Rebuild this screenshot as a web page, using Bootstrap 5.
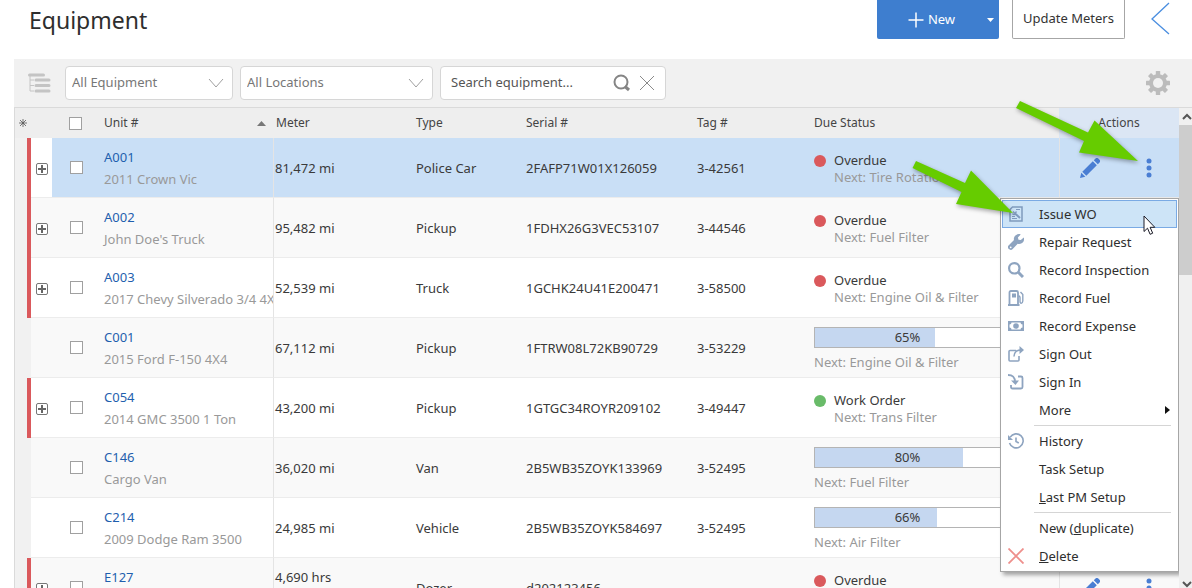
<!DOCTYPE html>
<html lang="en">
<head>
<meta charset="utf-8">
<meta name="viewport" content="width=device-width, initial-scale=1">
<title>Equipment</title>
<link rel="stylesheet" href="https://cdn.jsdelivr.net/npm/bootstrap@5.3.0/dist/css/bootstrap.min.css">
<style>
  body { font-family: "Noto Sans", "Open Sans", sans-serif; font-size: 13px; line-height: 18px; color: #3a3a3a; background: #fff; }
  .page-head { height: 59px; padding-left: 29px; padding-right: 22px; }
  .page-title { font-size: 23px; line-height: 40px; color: #2e2e2e; font-weight: 400; }
  .head-btn { height: 39px; border-radius: 0 0 2px 2px; font-size: 13px; border-top: 0; }
  .btn-new { width: 122px; background: #3e7ecf; color: #fff; border: 0; }
  .btn-new:hover { background: #346fbb; color: #fff; }
  .btn-meters { width: 113px; margin-left: 13px; border: 1px solid #a6a6a6; border-top: 0; color: #333; background: #fff; }
  .back-link { margin-left: 26px; height: 38px; }
  .panel { margin-left: 14px; }
  .toolbar { height: 48px; background: #f1f1f1; padding: 0 22px 0 14px; }
  .toolbar .form-select, .search-box { height: 34px; border: 1px solid #d6d6d6; border-radius: 4px; background-color: #fff; font-size: 13px; color: #777; }
  .toolbar .form-select { padding: 0 30px 0 6px;
    background-image: url("data:image/svg+xml,%3Csvg xmlns='http://www.w3.org/2000/svg' width='16' height='16' fill='none' stroke='%23a0a0a0'%3E%3Cpath d='M1 4l7 8 7-8'/%3E%3C/svg%3E");
    background-size: 16px 16px; background-position: right 8px center; }
  .pick-equipment { width: 168px; margin-left: 14px; }
  .pick-location { width: 193px; margin: 0 7px; }
  .search-box { width: 226px; padding: 0 10px; }
  .search-box input { font-size: 13px; color: #444; }
  .search-box input::placeholder { color: #555; opacity: 1; }
  .grid-wrap { border-top: 1px solid #dadada; border-left: 1px solid #dadada; }
  .grid-body { background: #f1f1f1; }
  .grid-table { table-layout: fixed; border-collapse: separate; border-spacing: 0; }
  .grid-table th { height: 30px; padding: 0; background: #eee; font-weight: 400; color: #444; font-size: 12px; }
  .grid-table th.th-actions { background: #dbe6f4; }
  .grid-table td { height: 60px; padding: 0; border-bottom: 1px solid #ececec; background: #fff; white-space: nowrap; }
  .grid-table tr:nth-child(even) td { background: #f9f9f9; }
  .grid-table tr.picked td { background: #c9dff6; }
  .grid-table tr.picked td.c-expand { background: #fff; }
  .grid-table tr td.c-gutter { background: #f1f1f1; border-bottom: 0; border-right: 4px solid #f1f1f1; }
  .grid-table tr.overdue td.c-gutter { border-right-color: #da595c; }
  .w-gutter { width: 16px; } .w-expand { width: 21px; } .w-check { width: 46px; } .w-unit { width: 176px; }
  .w-meter { width: 142px; } .w-type { width: 110px; } .w-serial { width: 171px; } .w-tag { width: 117px; } .w-act { width: 120px; }
  .grid-table .c-unit { padding-left: 6px; border-right: 1px solid #e4e4e4; overflow: hidden; }
  .grid-table th.th-unit { padding: 0 8px 0 6px; }
  .grid-table th.th-meter { padding-left: 2px; }
  .grid-table td.c-meter { padding-left: 1px; }
  .grid-table td.c-check { padding-left: 18px; }
  .grid-table th.th-check { padding-left: 17px; }
  .grid-table .c-act { border-left: 1px solid #e4e4e4; }
  .unit-link { color: #1f5fae; text-decoration: none; }
  .unit-name { color: #999; margin-top: 4px; }
  .next-task { color: #999; line-height: 17px; }
  .status-line { line-height: 17px; margin-top: 3px; }
  .dot { width: 12px; height: 12px; border-radius: 50%; background: #da595c; margin-right: 8px; }
  .dot-ok { background: #69bb69; }
  .due-bar { width: 187px; height: 21px; border: 1px solid #b4b4b4; border-radius: 0; background: #fff; font-size: 13px; margin: 3px 0 6px; }
  .due-bar .progress-bar { background: #c5d7f0; }
  .due-bar .due-pct { color: #3a3a3a; inset: 0; line-height: 19px; }
  .tick[type=checkbox] { width: 13px; height: 13px; margin: 0; border: 1px solid #a0a0a0; border-radius: 0; background-color: #fff; float: none; }
  .plain-btn { border: 0; background: transparent; padding: 0; line-height: 0; color: inherit; }
  .expand-btn { padding-left: 5px; }
  .row-tools { color: #4a7ed3; padding-left: 20px; gap: 38px; }
  .scroll-rail { width: 13px; background: #f0f0f0; overflow: hidden; color: #555; }
  .scroll-rail .plain-btn { height: 17px; padding-left: 3px; }
  .scroll-thumb { height: 150px; background: #cdcdcd; }
  .row-menu { top: 60px; right: 0; width: 179px; min-width: 0; padding: 1px; border: 1px solid #a6a6a6; border-radius: 0; box-shadow: 3px 3px 4px rgba(0,0,0,.35); font-size: 13px; z-index: 20; }
  .row-menu .dropdown-item { height: 28px; padding: 0 5px; line-height: 18px; gap: 15px; color: #2e2e2e; border: 1px solid transparent; }
  .row-menu .dropdown-item.hot { background: #cde4f7; border-color: #7aaae4; }
  .row-menu .dropdown-divider { margin: 1px 6px 1px 32px; border-color: #d5d5d5; opacity: 1; }
  .menu-icon { width: 16px; height: 16px; flex: none; color: #8ea4c0; }
  .pointer-art { z-index: 30; right: 13px; top: 39px; pointer-events: none; filter: drop-shadow(1px 2px 2px rgba(0,0,0,.35)); }
  .mouse-art { z-index: 31; right: 23px; top: 77px; pointer-events: none; }
</style>
</head>
<body class="vh-100 overflow-hidden d-flex flex-column">

<svg class="d-none" aria-hidden="true">
  <symbol id="i-plus" viewBox="0 0 12 12"><rect x=".5" y=".5" width="11" height="11" rx="1.500" fill="#fff" stroke="#777"/><path d="M2 6h8M6 2v8" stroke="#666" stroke-width="2"/></symbol>
  <symbol id="i-pencil" viewBox="0 0 20 20"><path fill="currentColor" d="M0 20l1.300-5.300L5.300 18.700zM2.300 13.700L12.800 3.200l4 4L6.300 17.700zM13.800 2.200L15.500.6a2 2 0 0 1 2.800 0l1.200 1.200a2 2 0 0 1 0 2.800l-1.700 1.600z"/></symbol>
  <symbol id="i-dots" viewBox="0 0 6 20"><g fill="currentColor"><circle cx="3" cy="3" r="2.500"/><circle cx="3" cy="10" r="2.500"/><circle cx="3" cy="17" r="2.500"/></g></symbol>
</svg>

<header class="page-head d-flex align-items-start flex-shrink-0">
  <h1 class="page-title m-0 me-auto">Equipment</h1>
  <button type="button" class="btn btn-new head-btn d-flex align-items-center p-0">
    <svg class="ms-auto me-1" width="16" height="16" fill="none" stroke="#fff" stroke-width="1.500"><path d="M8 .5v15M.5 8h15"/></svg>New
    <svg class="ms-auto me-1" width="9" height="6"><path d="M1 1h7l-3.500 4z" fill="#fff"/></svg>
  </button>
  <button type="button" class="btn btn-meters head-btn p-0">Update Meters</button>
  <a href="#" class="back-link" aria-label="Back"><svg width="19" height="38" fill="none" stroke="#4a8ee0" stroke-width="1.300"><path d="M18 3L1 19l17 15"/></svg></a>
</header>

<main class="panel d-flex flex-column flex-grow-1 overflow-hidden position-relative">
  <form class="toolbar d-flex align-items-center flex-shrink-0">
    <button type="button" class="plain-btn" aria-label="Tree view">
      <svg width="23" height="20" stroke="#c4c4c4" fill="none"><path d="M1.500 2h14M8 7h13M8 12.500h13M8 18h13" stroke-width="3" stroke-linecap="round"/><path d="M2 3v15M2 7h4M2 12.500h4M2 18h4" stroke-width="1"/></svg>
    </button>
    <select class="form-select pick-equipment flex-shrink-0" aria-label="Equipment"><option>All Equipment</option></select>
    <select class="form-select pick-location flex-shrink-0" aria-label="Location"><option>All Locations</option></select>
    <div class="search-box d-flex align-items-center">
      <input type="text" class="form-control border-0 p-0 shadow-none" placeholder="Search equipment..." aria-label="Search equipment">
      <button type="button" class="plain-btn" aria-label="Search"><svg width="18" height="18" fill="none" stroke="#858585" stroke-width="2"><circle cx="8" cy="8" r="6.500"/><path d="M12 12.500l4 3.500" stroke-width="3"/></svg></button>
      <button type="button" class="plain-btn ms-2" aria-label="Clear"><svg width="16" height="16" stroke="#8a8a8a"><path d="M1 1l14 14M15 1L1 15"/></svg></button>
    </div>
    <button type="button" class="plain-btn ms-auto" aria-label="Settings">
      <svg width="24" height="24" viewBox="-12 -12 24 24" fill="#bcbcbc"><g id="cog"><rect x="-2.200" y="-12" width="4.400" height="24" rx=".5"/><rect x="-12" y="-2.200" width="24" height="4.400" rx=".5"/></g><use href="#cog" transform="rotate(45)"/><circle r="9"/><circle r="5" fill="#f1f1f1"/></svg>
    </button>
  </form>

  <div class="grid-wrap d-flex flex-grow-1 overflow-hidden">
    <div class="grid-body flex-grow-1 overflow-hidden">
    <table class="grid-table w-100 align-middle">
      <colgroup><col class="w-gutter"><col class="w-expand"><col class="w-check"><col class="w-unit"><col class="w-meter"><col class="w-type"><col class="w-serial"><col class="w-tag"><col><col class="w-act"></colgroup>
      <thead>
        <tr>
          <th><svg class="d-block ms-1" width="8" height="8" stroke="#555"><path d="M4 0v8M0 4h8M1 1l6 6M7 1L1 7" stroke-width=".8"/></svg></th>
          <th></th>
          <th class="th-check"><input type="checkbox" class="form-check-input tick d-block" aria-label="Select all"></th>
          <th class="th-unit"><div class="d-flex align-items-center justify-content-between">Unit # <svg width="9" height="5"><path d="M0 5h9L4.500 0z" fill="#777"/></svg></div></th>
          <th class="th-meter">Meter</th><th>Type</th><th>Serial #</th><th>Tag #</th><th>Due Status</th>
          <th class="th-actions text-center">Actions</th>
        </tr>
      </thead>
      <tbody id="rows">
        <tr class="overdue picked">
          <td class="c-gutter"></td><td class="c-expand"><button type="button" class="plain-btn expand-btn" aria-label="Expand"><svg width="12" height="12"><use href="#i-plus"/></svg></button></td>
          <td class="c-check"><input type="checkbox" class="form-check-input tick d-block" aria-label="Select A001"></td>
          <td class="c-unit"><a href="#" class="unit-link">A001</a><div class="unit-name">2011 Crown Vic</div></td>
          <td class="c-meter">81,472 mi</td><td>Police Car</td><td>2FAFP71W01X126059</td><td>3-42561</td>
          <td><div class="d-flex align-items-center status-line"><span class="dot"></span>Overdue</div><div class="next-task ps-3 ms-1">Next: Tire Rotation</div></td>
          <td class="c-act position-relative">
            <div class="row-tools d-flex align-items-center"><button type="button" class="plain-btn" aria-label="Edit"><svg width="20" height="20"><use href="#i-pencil"/></svg></button><button type="button" class="plain-btn" aria-label="More actions"><svg width="22" height="20" viewBox="0 0 22 20"><use href="#i-dots" x="8" width="6" height="20"/></svg></button></div>
            <ul class="dropdown-menu row-menu show">
              <li><button type="button" class="dropdown-item hot d-flex align-items-center">
                <svg class="menu-icon" viewBox="0 0 16 16" fill="none" stroke="#7f9abd" stroke-width="1.500"><path d="M4.500 1H14v14H2V3.500z"/><path d="M8 3.500h4M4 12.500h5M4 10.500h3" stroke-width="1"/><path d="M7 7.500l5 4.500" stroke-width="2"/><path d="M5 5.500l2 2 1.500-2M4.500 7.500Q6 9.500 8 8" stroke-width="1.300"/></svg>Issue WO</button></li>
              <li><button type="button" class="dropdown-item d-flex align-items-center">
                <svg class="menu-icon" viewBox="0 0 16 16" fill="currentColor"><path d="M15.800 3.500l-3 2.600-2.300-.4-.6-2.300L12.700.4C9.800-.6 6.700.9 6 3.700c-.2.900-.2 1.500 0 2.200L.8 11.200a2.700 2.700 0 0 0 0 3.900c1.100 1.100 2.900 1.100 3.900-.1l5-5.300c2.200.6 4.700-.2 5.800-2.300.7-1.200.8-2.700.3-3.900zM2.700 14.200a.9.900 0 1 1 0-1.800.9.900 0 0 1 0 1.800z"/></svg>Repair Request</button></li>
              <li><button type="button" class="dropdown-item d-flex align-items-center">
                <svg class="menu-icon" viewBox="0 0 16 16" fill="none" stroke="currentColor"><circle cx="6.300" cy="6.300" r="5.200" stroke-width="2.200"/><path d="M10 10l5 5" stroke-width="3"/></svg>Record Inspection</button></li>
              <li><button type="button" class="dropdown-item d-flex align-items-center">
                <svg class="menu-icon" viewBox="0 0 16 16" fill="none" stroke="currentColor"><path d="M1.500 15V2.500Q1.500 1 3 1h5.500Q10 1 10 2.500V15M0 15h11.500" stroke-width="1.800"/><rect x="4" y="3.500" width="4" height="4" fill="currentColor" stroke="none"/><path d="M10.500 6c2 0 1.500 2 1.500 5s2.500 3 2.800 0V4.500L12.500 2" stroke-width="1.400"/></svg>Record Fuel</button></li>
              <li><button type="button" class="dropdown-item d-flex align-items-center">
                <svg class="menu-icon" viewBox="0 0 16 16"><path fill="currentColor" fill-rule="evenodd" d="M0 3h16v10H0zM3.500 4.500A2 2 0 0 1 1.500 6.500v3a2 2 0 0 1 2 2h9a2 2 0 0 1 2-2v-3a2 2 0 0 1-2-2z"/><circle cx="8" cy="8" r="2.800" fill="currentColor"/></svg>Record Expense</button></li>
              <li><button type="button" class="dropdown-item d-flex align-items-center">
                <svg class="menu-icon" viewBox="0 0 16 16" fill="none" stroke="currentColor" stroke-width="1.600"><path d="M8 4.500H2q-1 0-1 1V14q0 1 1 1h8q1 0 1-1v-4"/><path d="M6 10.500C6 6 9 4 13 4"/><path d="M11.500 0L16 4l-4.500 4z" fill="currentColor" stroke="none"/></svg>Sign Out</button></li>
              <li><button type="button" class="dropdown-item d-flex align-items-center">
                <svg class="menu-icon" viewBox="0 0 16 16" fill="none" stroke="currentColor" stroke-width="1.800"><path d="M10 2.500h3q1.500 0 1.500 1.500v9q0 1.500-1.500 1.500H4.500Q3 14.500 3 13v-2"/><path d="M0 1c4.500 0 7 2 7 7"/><path d="M3 6.500l4.500 4.500 3.500-4.500z" fill="currentColor" stroke="none"/></svg>Sign In</button></li>
              <li><button type="button" class="dropdown-item d-flex align-items-center"><span class="menu-icon"></span>More<svg class="ms-auto" width="6" height="8"><path d="M0 0v8l5-4z" fill="#111"/></svg></button></li>
              <li><hr class="dropdown-divider"></li>
              <li><button type="button" class="dropdown-item d-flex align-items-center">
                <svg class="menu-icon" viewBox="0 0 16 16" fill="none" stroke="currentColor" stroke-width="1.600"><path d="M2.200 4.200A7 7 0 1 1 1.500 10"/><path d="M8 4.500V8.500l2.800 1.500"/><path d="M0 2v5h5z" fill="currentColor" stroke="none"/></svg>History</button></li>
              <li><button type="button" class="dropdown-item d-flex align-items-center"><span class="menu-icon"></span>Task Setup</button></li>
              <li><button type="button" class="dropdown-item d-flex align-items-center"><span class="menu-icon"></span><span><u>L</u>ast PM Setup</span></button></li>
              <li><hr class="dropdown-divider"></li>
              <li><button type="button" class="dropdown-item d-flex align-items-center"><span class="menu-icon"></span><span>New (<u>d</u>uplicate)</span></button></li>
              <li><button type="button" class="dropdown-item d-flex align-items-center">
                <svg class="menu-icon" viewBox="0 0 16 16" stroke="#ee8f8c" stroke-width="1.800"><path d="M.5.5l15 15M15.500.5l-15 15"/></svg><span><u>D</u>elete</span></button></li>
            </ul>
            <svg class="mouse-art position-absolute" width="13" height="21" aria-hidden="true"><path d="M1 1v15.500l3.500-3.300 2.600 6.100 2.600-1.100-2.600-5.900h4.700z" fill="#fff" stroke="#1c1c28" stroke-linejoin="round"/></svg>
          </td>
        </tr>
      </tbody>
    </table>
    </div>
    <div class="scroll-rail d-flex flex-column flex-shrink-0">
      <button type="button" class="plain-btn" aria-label="Scroll up"><svg width="10" height="8" fill="none" stroke="#555" stroke-width="2"><path d="M1 6l4-4 4 4"/></svg></button>
      <div class="scroll-thumb"></div>
      <button type="button" class="plain-btn mt-auto" aria-label="Scroll down"><svg class="mt-2" width="10" height="8" fill="none" stroke="#555" stroke-width="2"><path d="M1 2l4 4 4-4"/></svg></button>
    </div>
  </div>
  <svg class="pointer-art position-absolute" width="270" height="120" fill="#66cc00" aria-hidden="true"><path d="M111 3l68 31.500 6.500-12L229 63l-59-8.500 5-11.500L107 10zM7 63l49 22 6-12.500L104 115l-57-9 5.500-12L3.500 70z"/></svg>
</main>

<script src="https://cdn.jsdelivr.net/npm/bootstrap@5.3.0/dist/js/bootstrap.bundle.min.js"></script>
<script>
  // unit, description, meter, type, serial, tag, status (text or percent), next task, expandable
  const fleet = [
    ["A002", "John Doe's Truck", "95,482 mi", "Pickup", "1FDHX26G3VEC53107", "3-44546", "Overdue", "Fuel Filter", true],
    ["A003", "2017 Chevy Silverado 3/4 4X4", "52,539 mi", "Truck", "1GCHK24U41E200471", "3-58500", "Overdue", "Engine Oil &amp; Filter", true],
    ["C001", "2015 Ford F-150 4X4", "67,112 mi", "Pickup", "1FTRW08L72KB90729", "3-53229", 65, "Engine Oil &amp; Filter", false],
    ["C054", "2014 GMC 3500 1 Ton", "43,200 mi", "Pickup", "1GTGC34ROYR209102", "3-49447", "Work Order", "Trans Filter", true],
    ["C146", "Cargo Van", "36,020 mi", "Van", "2B5WB35ZOYK133969", "3-52495", 80, "Fuel Filter", false],
    ["C214", "2009 Dodge Ram 3500", "24,985 mi", "Vehicle", "2B5WB35ZOYK584697", "3-52495", 66, "Air Filter", false],
    ["E127", "", "4,690 hrs", "Dozer", "d202123456", "", "Overdue", "", true]
  ];
  const due = (s, next) => typeof s === "number"
    ? `<div class="progress due-bar position-relative"><div class="progress-bar" style="width:${s}%"></div><span class="due-pct position-absolute text-center">${s}%</span></div><div class="next-task">Next: ${next}</div>`
    : `<div class="d-flex align-items-center status-line"><span class="dot ${s === "Work Order" ? "dot-ok" : ""}"></span>${s}</div><div class="next-task ps-3 ms-1">${next ? "Next: " + next : "&nbsp;"}</div>`;
  document.getElementById("rows").insertAdjacentHTML("beforeend", fleet.map(([id, name, meter, type, serial, tag, s, next, open]) => `
    <tr class="${open ? "overdue" : ""}">
      <td class="c-gutter"></td>
      <td>${open ? '<button type="button" class="plain-btn expand-btn" aria-label="Expand"><svg width="12" height="12"><use href="#i-plus"/></svg></button>' : ""}</td>
      <td class="c-check"><input type="checkbox" class="form-check-input tick d-block" aria-label="Select ${id}"></td>
      <td class="c-unit"><a href="#" class="unit-link">${id}</a><div class="unit-name">${name || "&nbsp;"}</div></td>
      <td class="c-meter">${meter}${meter.endsWith("hrs") ? '<div class="unit-name">&nbsp;</div>' : ""}</td>
      <td>${type}</td><td>${serial}</td><td>${tag}</td>
      <td>${due(s, next)}</td>
      <td class="c-act"><div class="row-tools d-flex align-items-center"><button type="button" class="plain-btn" aria-label="Edit"><svg width="20" height="20"><use href="#i-pencil"/></svg></button><button type="button" class="plain-btn" aria-label="More actions"><svg width="22" height="20" viewBox="0 0 22 20"><use href="#i-dots" x="8" width="6" height="20"/></svg></button></div></td>
    </tr>`).join(""));
</script>
</body>
</html>
